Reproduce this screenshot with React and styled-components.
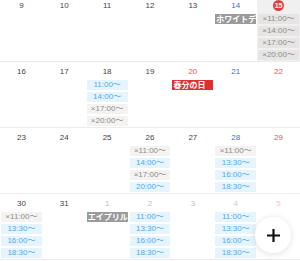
import React from "react";
import styled, { createGlobalStyle, css } from "styled-components";

const GlobalStyle = createGlobalStyle`
  html, body {
    margin: 0;
    padding: 0;
    background: #ffffff;
    overflow: hidden;
  }
  body {
    font-family: "Liberation Sans", Arial, "Noto Sans CJK JP", sans-serif;
  }
  * { box-sizing: border-box; }
`;

const Calendar = styled.div`
  margin-top: -4px;
  display: flex;
  flex-direction: column;
`;

const WeekRow = styled.div`
  display: grid;
  grid-template-columns: repeat(7, 1fr);
  height: 66px;
  border-bottom: 1px solid #ececec;
`;

const DayCell = styled.div`
  display: flex;
  flex-direction: column;
  padding: 0 1px;
  min-width: 0;
  background: ${(p) => (p.$today ? "#f0f0f0" : "transparent")};
`;

const dateColors = {
  weekday: "#444444",
  sat: "#4170c2",
  sun: "#e05858",
};

const DateLabel = styled.div`
  height: 18px;
  display: flex;
  align-items: center;
  justify-content: center;
  font-size: 8px;
  color: ${(p) => dateColors[p.$kind]};
  opacity: ${(p) => (p.$faded ? 0.35 : 1)};
`;

const TodayMark = styled.span`
  width: 11px;
  height: 11px;
  border-radius: 50%;
  background: #e33b3b;
  color: #ffffff;
  font-weight: bold;
  font-size: 7px;
  display: flex;
  align-items: center;
  justify-content: center;
`;

const EventList = styled.div`
  display: flex;
  flex-direction: column;
  gap: 2px;
`;

const chipVariants = {
  open: css`
    background: #e6f4fe;
    color: #4eaaee;
  `,
  closed: css`
    background: rgba(100, 80, 60, 0.07);
    color: #8e8c8a;
  `,
};

const EventChip = styled.div`
  height: 10px;
  line-height: 10px;
  font-size: 8px;
  text-align: center;
  white-space: nowrap;
  overflow: hidden;
  ${(p) => chipVariants[p.$variant]}
`;

const HolidayChip = styled.div`
  height: 10px;
  line-height: 10px;
  font-size: 8px;
  font-weight: bold;
  color: #ffffff;
  padding-left: 1px;
  white-space: nowrap;
  overflow: hidden;
  font-family: "Noto Sans CJK JP", sans-serif;
  background: ${(p) => (p.$red ? "#e02f2f" : "#9b9b9b")};
`;

const Fab = styled.button`
  position: fixed;
  right: 9px;
  bottom: 8px;
  width: 36px;
  height: 36px;
  border-radius: 50%;
  border: none;
  padding: 0;
  background: #ffffff;
  box-shadow: 0 1px 7px rgba(0, 0, 0, 0.13);
  display: flex;
  align-items: center;
  justify-content: center;
`;

const PlusIcon = () => (
  <svg width="13" height="13" viewBox="0 0 13 13">
    <path d="M6.5 1v11M1 6.5h11" stroke="#111" strokeWidth="2.2" strokeLinecap="square" />
  </svg>
);

const o = (t) => ({ type: "open", t });
const c = (t) => ({ type: "closed", t });
const h = (t, red) => ({ type: "holiday", t, red });

const weeks = [
  [
    { d: 9 },
    { d: 10 },
    { d: 11 },
    { d: 12 },
    { d: 13 },
    { d: 14, kind: "sat", ev: [h("ホワイトデー", false)] },
    { d: 15, kind: "sun", today: true, ev: [c("×11:00〜"), c("×14:00〜"), c("×17:00〜"), c("×20:00〜")] },
  ],
  [
    { d: 16 },
    { d: 17 },
    { d: 18, ev: [o("11:00〜"), o("14:00〜"), c("×17:00〜"), c("×20:00〜")] },
    { d: 19 },
    { d: 20, kind: "sun", ev: [h("春分の日", true)] },
    { d: 21, kind: "sat" },
    { d: 22, kind: "sun" },
  ],
  [
    { d: 23 },
    { d: 24 },
    { d: 25 },
    { d: 26, ev: [c("×11:00〜"), o("14:00〜"), c("×17:00〜"), o("20:00〜")] },
    { d: 27 },
    { d: 28, kind: "sat", ev: [c("×11:00〜"), o("13:30〜"), o("16:00〜"), o("18:30〜")] },
    { d: 29, kind: "sun" },
  ],
  [
    { d: 30, ev: [c("×11:00〜"), o("13:30〜"), o("16:00〜"), o("18:30〜")] },
    { d: 31 },
    { d: 1, faded: true, ev: [h("エイプリルフール", false)] },
    { d: 2, faded: true, ev: [o("11:00〜"), o("13:30〜"), o("16:00〜"), o("18:30〜")] },
    { d: 3, faded: true },
    { d: 4, kind: "sat", faded: true, ev: [o("11:00〜"), o("13:30〜"), o("16:00〜"), o("18:30〜")] },
    { d: 5, kind: "sun", faded: true },
  ],
];

export default function App() {
  return (
    <>
      <GlobalStyle />
      <Calendar>
        {weeks.map((week, wi) => (
          <WeekRow key={wi}>
            {week.map((day) => (
              <DayCell key={`${wi}-${day.d}`} $today={day.today}>
                <DateLabel $kind={day.kind || "weekday"} $faded={day.faded}>
                  {day.today ? <TodayMark>{day.d}</TodayMark> : day.d}
                </DateLabel>
                <EventList>
                  {(day.ev || []).map((e, i) =>
                    e.type === "holiday" ? (
                      <HolidayChip key={i} $red={e.red}>{e.t}</HolidayChip>
                    ) : (
                      <EventChip key={i} $variant={e.type}>{e.t}</EventChip>
                    )
                  )}
                </EventList>
              </DayCell>
            ))}
          </WeekRow>
        ))}
      </Calendar>
      <Fab aria-label="追加">
        <PlusIcon />
      </Fab>
    </>
  );
}
